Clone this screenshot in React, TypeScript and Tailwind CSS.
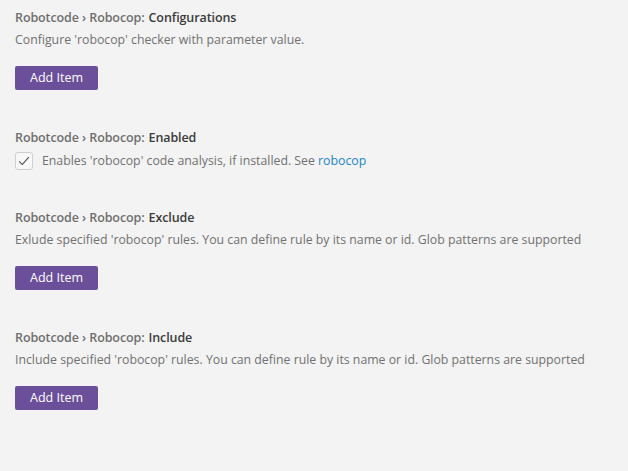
const font = { fontFamily: '"Segoe UI", "Open Sans", "Noto Sans", sans-serif' };

type Setting = {
  name: string;
  description: string;
  kind: "list" | "checkbox";
};

const settings: Setting[] = [
  { name: "Configurations", description: "Configure 'robocop' checker with parameter value.", kind: "list" },
  { name: "Enabled", description: "Enables 'robocop' code analysis, if installed. See ", kind: "checkbox" },
  {
    name: "Exclude",
    description: "Exlude specified 'robocop' rules. You can define rule by its name or id. Glob patterns are supported",
    kind: "list",
  },
  {
    name: "Include",
    description: "Include specified 'robocop' rules. You can define rule by its name or id. Glob patterns are supported",
    kind: "list",
  },
];

function Title({ name }: { name: string }) {
  return (
    <div className="h-[22px] flex items-center text-[12.5px] font-semibold tracking-[-0.1px] whitespace-nowrap">
      <span className="text-[#6f6f6f]">Robotcode › Robocop:</span>
      <span className="text-[#3b3b3b] ml-[4px]">{name}</span>
    </div>
  );
}

function AddItem() {
  return (
    <button className="mt-[15px] w-[83px] h-[24px] rounded-[2px] bg-[#6b4f9b] text-white text-[12.5px] flex items-center justify-center">
      Add Item
    </button>
  );
}

function Check() {
  return (
    <div className="w-[18px] h-[18px] rounded-[3px] border border-[#cecece] bg-[#f8f8f8] flex items-center justify-center shrink-0">
      <svg width="14" height="14" viewBox="0 0 16 16" fill="none">
        <path d="M2.5 8.5 L6 12 L13.5 3.5" stroke="#424242" strokeWidth="1.2" />
      </svg>
    </div>
  );
}

export default function App() {
  return (
    <div className="w-[628px] h-[471px] bg-[#f3f3f3] px-[15px] pt-[7px]" style={font}>
      {settings.map((s) => (
        <div key={s.name} className={s.kind === "list" ? "h-[120px]" : "h-[80px]"}>
          <Title name={s.name} />
          {s.kind === "list" ? (
            <>
              <div className="h-[22px] flex items-center text-[12.3px] whitespace-nowrap text-[#717171]">
                {s.description}
              </div>
              <AddItem />
            </>
          ) : (
            <div className="flex items-center gap-[9px] mt-[1px] h-[22px]">
              <Check />
              <span className="text-[12.3px] whitespace-nowrap text-[#717171]">
                {s.description}
                <a className="text-[#1a85c8]">robocop</a>
              </span>
            </div>
          )}
        </div>
      ))}
    </div>
  );
}
